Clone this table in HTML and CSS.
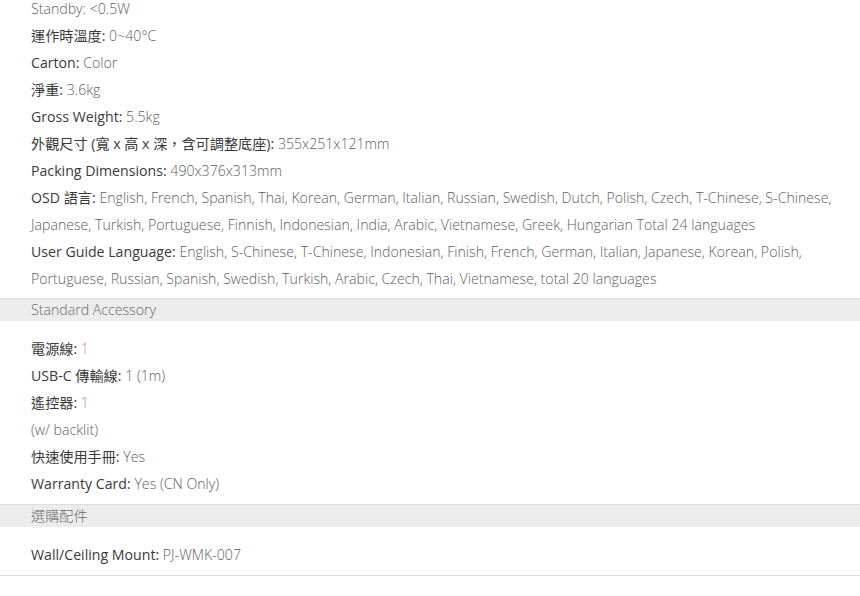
FILE: index.html
```html
<!DOCTYPE html>
<html>
<head>
<meta charset="utf-8">
<link rel="stylesheet" href="styles.css">
</head>
<body>
<div class="specs">
  <ul class="list first">
    <li><span class="val">Standby: &lt;0.5W</span></li>
    <li><span class="lbl">運作時溫度:</span> <span class="val">0~40°C</span></li>
    <li><span class="lbl">Carton:</span> <span class="val">Color</span></li>
    <li><span class="lbl">淨重:</span> <span class="val">3.6kg</span></li>
    <li><span class="lbl">Gross Weight:</span> <span class="val">5.5kg</span></li>
    <li><span class="lbl">外觀尺寸 (寬 x 高 x 深，含可調整底座):</span> <span class="val">355x251x121mm</span></li>
    <li><span class="lbl">Packing Dimensions:</span> <span class="val">490x376x313mm</span></li>
    <li><span class="lbl">OSD 語言:</span> <span class="val">English, French, Spanish, Thai, Korean, German, Italian, Russian, Swedish, Dutch, Polish, Czech, T-Chinese, S-Chinese, Japanese, Turkish, Portuguese, Finnish, Indonesian, India, Arabic, Vietnamese, Greek, Hungarian Total 24 languages</span></li>
    <li><span class="lbl">User Guide Language:</span> <span class="val">English, S-Chinese, T-Chinese, Indonesian, Finish, French, German, Italian, Japanese, Korean, Polish, Portuguese, Russian, Spanish, Swedish, Turkish, Arabic, Czech, Thai, Vietnamese, total 20 languages</span></li>
  </ul>
  <div class="band">Standard Accessory</div>
  <ul class="list">
    <li><span class="lbl">電源線:</span> <span class="red">1</span></li>
    <li><span class="lbl">USB-C 傳輸線:</span> <span class="val">1 (1m)</span></li>
    <li><span class="lbl">遙控器:</span> <span class="red">1</span></li>
    <li><span class="val">(w/ backlit)</span></li>
    <li><span class="lbl">快速使用手冊:</span> <span class="val">Yes</span></li>
    <li><span class="lbl">Warranty Card:</span> <span class="val">Yes (CN Only)</span></li>
  </ul>
  <div class="band">選購配件</div>
  <ul class="list last">
    <li><span class="lbl">Wall/Ceiling Mount:</span> <span class="val">PJ-WMK-007</span></li>
  </ul>
</div>
</body>
</html>
```
FILE: styles.css
```css
html, body {
  margin: 0;
  padding: 0;
  background: #fff;
}
body {
  font-family: "Open Sans", "Noto Sans CJK TC", sans-serif;
  font-size: 14.15px;
  color: #333;
}
.specs {
  width: 860px;
}
.list {
  list-style: none;
  margin: 0;
  padding: 14px 0 7px 31px;
}
.list.first {
  margin-top: -5px;
  padding-top: 0;
  padding-bottom: 6px;
}
.list.last {
  border-bottom: 1px solid #ddd;
}
.list li {
  line-height: 27px;
  padding-right: 20px;
}
.lbl {
  color: #3a3a3a;
  font-weight: 400;
}
.val {
  color: #5e5e5e;
  font-weight: 300;
}
.red {
  color: #d9806f;
  font-weight: 300;
}
.band {
  border-top: 1px solid #ddd;
  background: #ececec;
  height: 22px;
  line-height: 22px;
  padding-left: 31px;
  color: #6a6a6a;
  font-weight: 300;
}
```
